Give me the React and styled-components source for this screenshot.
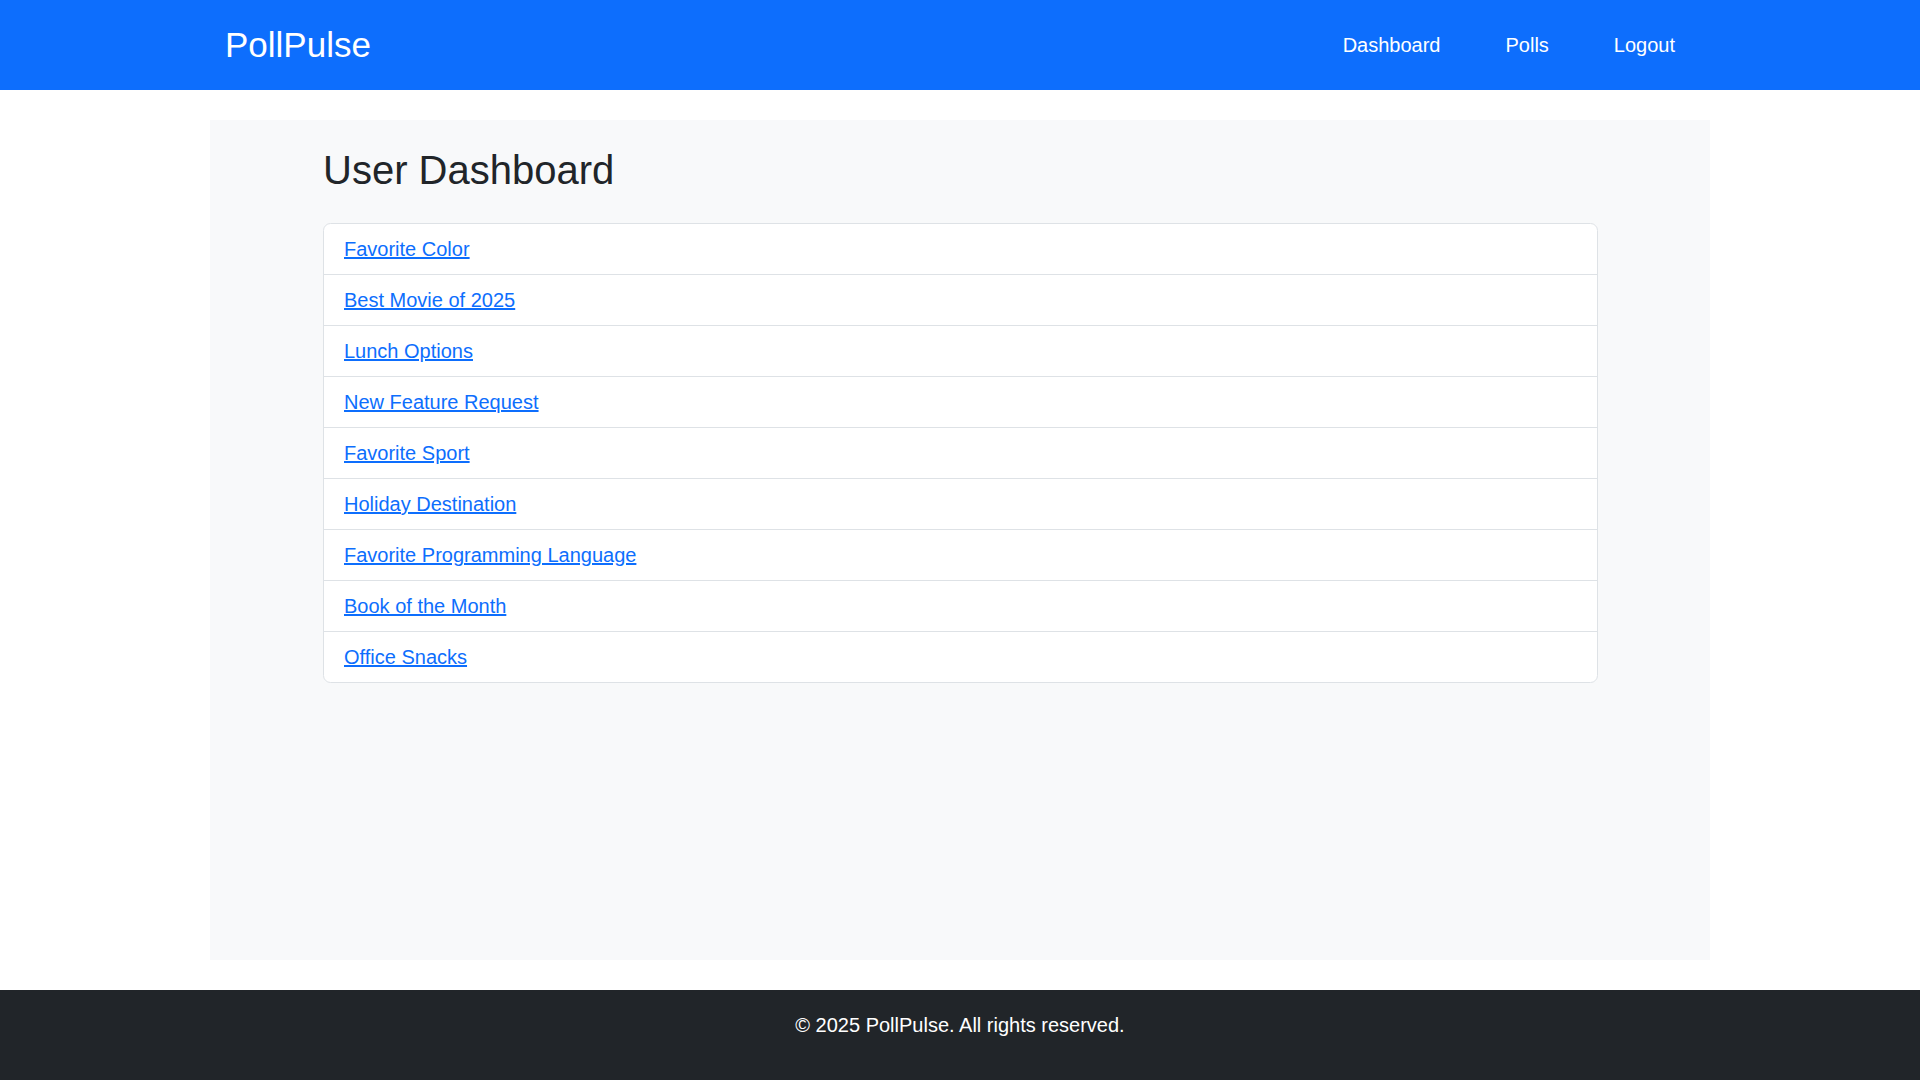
import React from "react";
import styled, { createGlobalStyle } from "styled-components";

const polls = [
  "Favorite Color",
  "Best Movie of 2025",
  "Lunch Options",
  "New Feature Request",
  "Favorite Sport",
  "Holiday Destination",
  "Favorite Programming Language",
  "Book of the Month",
  "Office Snacks",
];

const GlobalStyle = createGlobalStyle`
  * {
    box-sizing: border-box;
  }
  html, body {
    margin: 0;
    padding: 0;
  }
  body {
    font-family: "Liberation Sans", Arial, sans-serif;
    font-size: 20px;
    line-height: 1.5;
    color: #212529;
    background: #ffffff;
  }
`;

export default function App() {
  return (
    <Page>
      <GlobalStyle />
      <Navbar>
        <NavInner>
          <Brand href="#">PollPulse</Brand>
          <NavLinks>
            <NavLink href="#">Dashboard</NavLink>
            <NavLink href="#">Polls</NavLink>
            <NavLink href="#">Logout</NavLink>
          </NavLinks>
        </NavInner>
      </Navbar>

      <Main>
        <Content>
          <Title>User Dashboard</Title>
          <PollList>
            {polls.map((p) => (
              <PollItem key={p}>
                <PollLink href="#">{p}</PollLink>
              </PollItem>
            ))}
          </PollList>
        </Content>
      </Main>

      <Footer>
        <FooterText>© 2025 PollPulse. All rights reserved.</FooterText>
      </Footer>
    </Page>
  );
}

const Page = styled.div`
  min-height: 100vh;
  display: flex;
  flex-direction: column;
`;

const Navbar = styled.nav`
  background: #0d6efd;
  height: 90px;
  display: flex;
  align-items: center;
`;

const NavInner = styled.div`
  width: 1500px;
  margin: 0 auto;
  padding: 0 15px;
  display: flex;
  align-items: center;
  justify-content: space-between;
`;

const Brand = styled.a`
  color: #ffffff;
  font-size: 35px;
  line-height: 1.5;
  text-decoration: none;
`;

const NavLinks = styled.div`
  display: flex;
  align-items: center;
  gap: 65px;
  margin-right: 20px;
`;

const NavLink = styled.a`
  color: #ffffff;
  font-size: 20px;
  line-height: 30px;
  text-decoration: none;
`;

const Main = styled.main`
  flex: 1;
  width: 1500px;
  margin: 30px auto;
  background: #f8f9fa;
  padding: 26px 112px 30px 113px;
`;

const Content = styled.div`
  width: 100%;
`;

const Title = styled.h2`
  margin: 0 0 29px;
  font-size: 40px;
  font-weight: 500;
  line-height: 1.2;
  color: #212529;
`;

const PollList = styled.ul`
  list-style: none;
  margin: 0;
  padding: 0;
  border: 1px solid #dee2e6;
  border-radius: 7.5px;
  background: #ffffff;
  overflow: hidden;
`;

const PollItem = styled.li`
  padding: 10px 20px;
  line-height: 30px;
  & + & {
    border-top: 1px solid #dee2e6;
  }
`;

const PollLink = styled.a`
  color: #0d6efd;
  text-decoration: underline;
  font-size: 20px;
`;

const Footer = styled.footer`
  background: #212529;
  color: #ffffff;
  text-align: center;
  padding: 20px 0;
`;

const FooterText = styled.p`
  margin: 0 0 20px;
  font-size: 20px;
  line-height: 30px;
`;
